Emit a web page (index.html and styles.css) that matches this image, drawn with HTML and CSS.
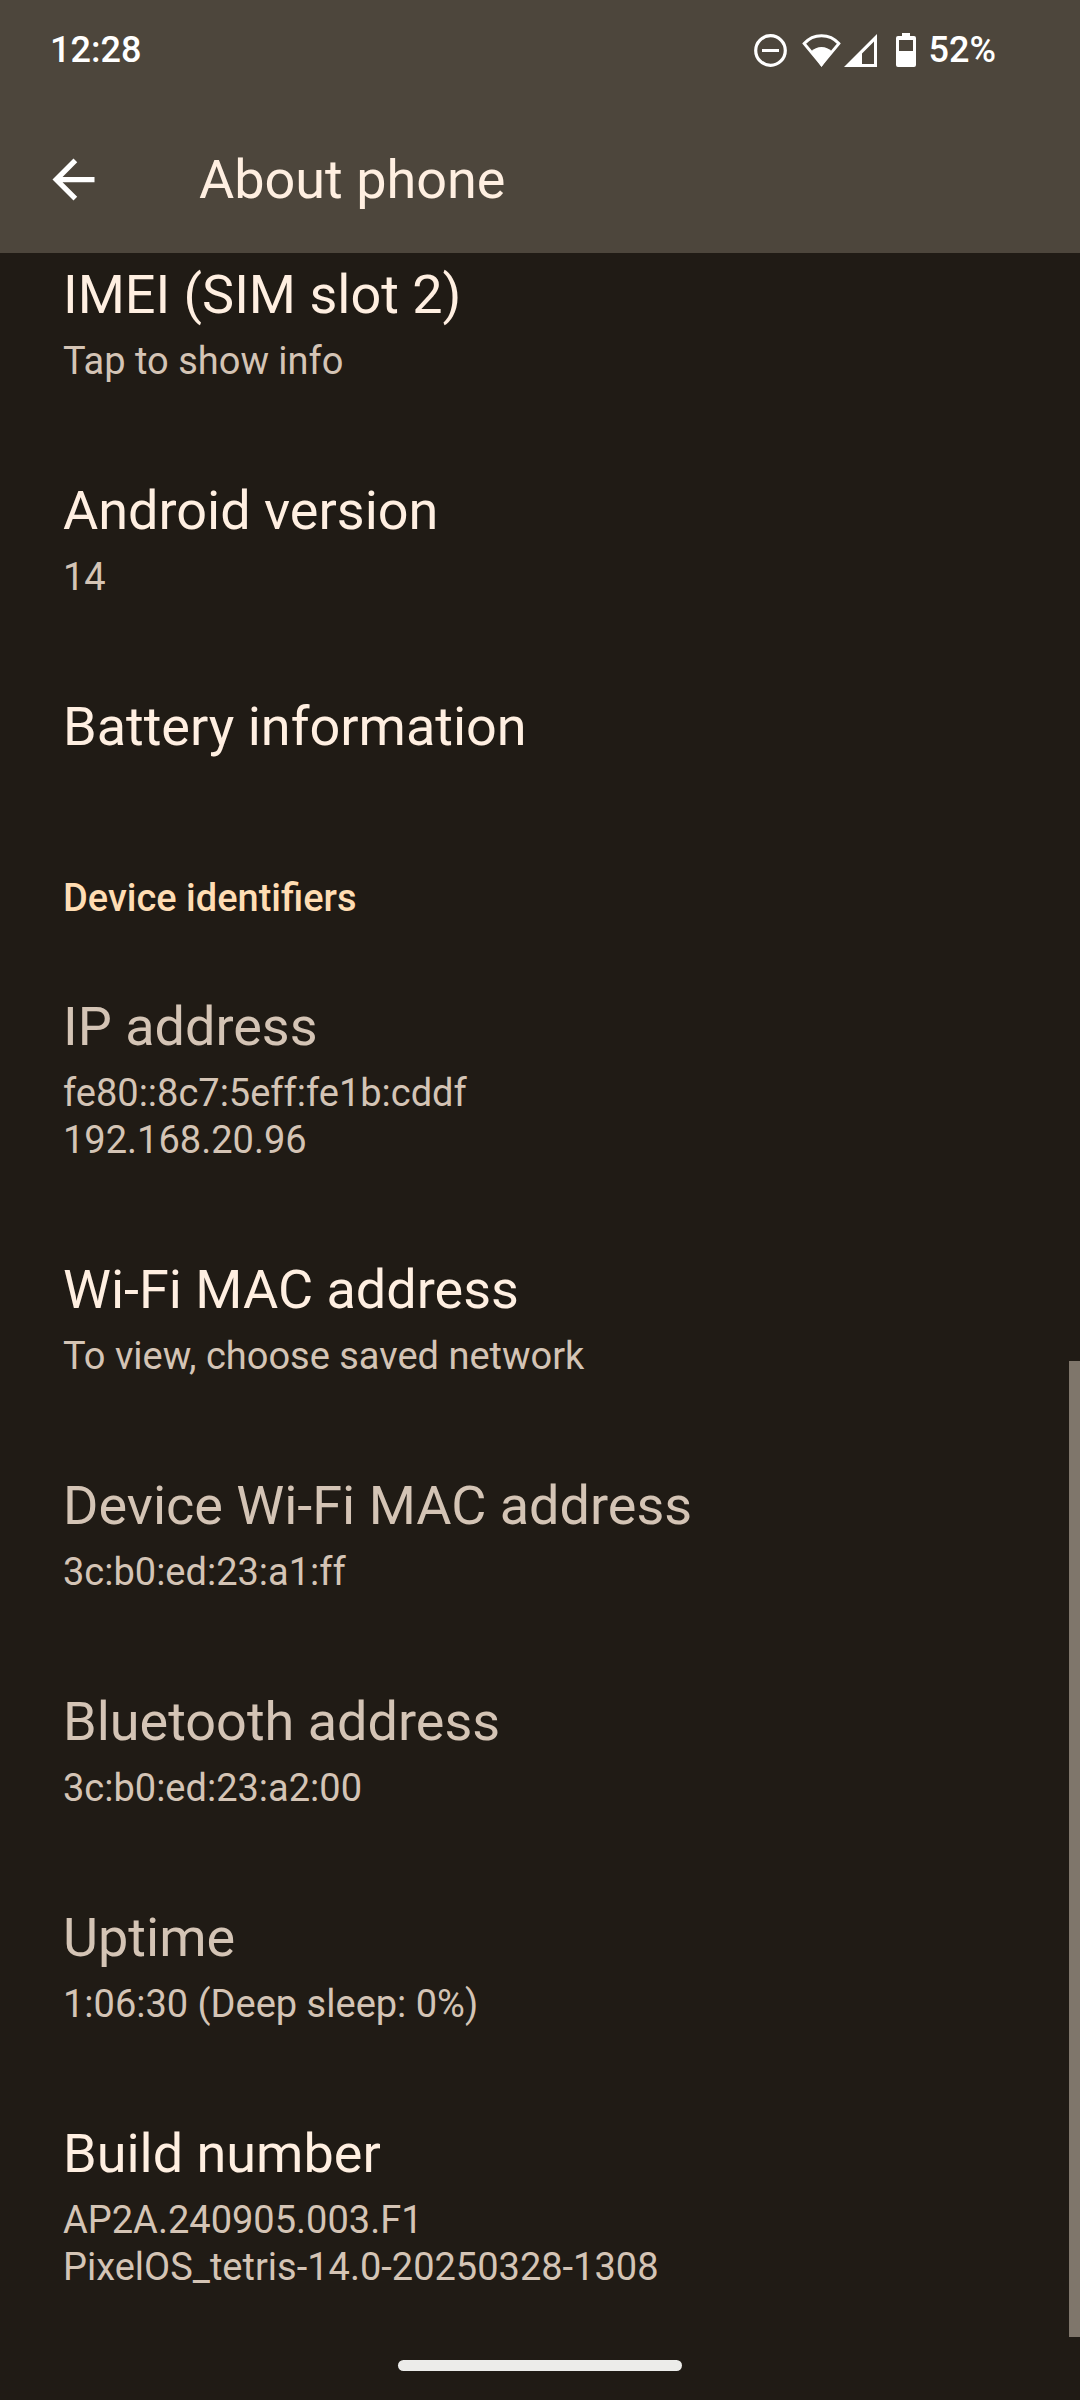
FILE: index.html
```html
<!DOCTYPE html>
<html lang="en">
<head>
<meta charset="utf-8">
<meta name="viewport" content="width=device-width, initial-scale=1">
<title>About phone</title>
<link rel="stylesheet" href="styles.css">
</head>
<body>
<div class="screen">
  <header class="header">
    <div class="status-bar">
      <time class="status-text">12:28</time>
      <div class="status-icons">
        <svg class="icon-dnd" width="33" height="33" viewBox="0 0 33 33" aria-hidden="true">
          <circle cx="16.5" cy="16.5" r="14.8" fill="none" stroke="#fff" stroke-width="3.2"/>
          <path d="M8 15h17v3H8z" fill="#fff"/>
        </svg>
        <svg class="icon-wifi" width="39" height="33" viewBox="0 0 39 33" aria-hidden="true">
          <path d="M2.2 9.6C6.7 4.4 13 1.7 19.5 1.7S32.300 4.400 36.800 9.600L19.500 30.500Z" fill="none" stroke="#fff" stroke-width="3"/>
          <path d="M9 17.500c3-3 6.500-4.500 10.500-4.500s7.500 1.500 10.500 4.500L19.500 33Z" fill="#fff"/>
        </svg>
        <svg class="icon-signal" width="33" height="33" viewBox="0 0 33 33" aria-hidden="true">
          <path fill-rule="evenodd" d="M33 0v33H0ZM30 7.500 18 19.500V30H30Z" fill="#fff"/>
        </svg>
        <svg class="icon-battery" width="20" height="34" viewBox="0 0 20 34" aria-hidden="true">
          <path fill-rule="evenodd" d="M6 0h8v3h4a2 2 0 0 1 2 2v27a2 2 0 0 1-2 2H2a2 2 0 0 1-2-2V5a2 2 0 0 1 2-2h4ZM3 7v11h14V7Z" fill="#fff"/>
        </svg>
        <span class="status-text">52%</span>
      </div>
    </div>
    <div class="app-bar">
      <button class="back" type="button" aria-label="Navigate up">
        <svg width="63" height="63" viewBox="0 0 24 24" aria-hidden="true">
          <path d="M20 11H7.830l5.590-5.590L12 4l-8 8 8 8 1.410-1.410L7.830 13H20z" fill="#fff"/>
        </svg>
      </button>
      <h1 class="app-title">About phone</h1>
    </div>
  </header>

  <main class="content">
    <ul class="list">
      <li><button class="item item-first" type="button">
        <span class="title">IMEI (SIM slot 2)</span>
        <span class="summary">Tap to show info</span>
      </button></li>
      <li><button class="item" type="button">
        <span class="title">Android version</span>
        <span class="summary">14</span>
      </button></li>
      <li><button class="item" type="button">
        <span class="title">Battery information</span>
      </button></li>
    </ul>
    <h2 class="category">Device identifiers</h2>
    <ul class="list">
      <li class="item item-static">
        <span class="title">IP address</span>
        <span class="summary">fe80::8c7:5eff:fe1b:cddf<br>192.168.20.96</span>
      </li>
      <li><button class="item" type="button">
        <span class="title">Wi-Fi MAC address</span>
        <span class="summary">To view, choose saved network</span>
      </button></li>
      <li class="item item-static">
        <span class="title">Device Wi-Fi MAC address</span>
        <span class="summary">3c:b0:ed:23:a1:ff</span>
      </li>
      <li class="item item-static">
        <span class="title">Bluetooth address</span>
        <span class="summary">3c:b0:ed:23:a2:00</span>
      </li>
      <li class="item item-static">
        <span class="title">Uptime</span>
        <span class="summary">1:06:30 (Deep sleep: 0%)</span>
      </li>
      <li><button class="item" type="button">
        <span class="title">Build number</span>
        <span class="summary">AP2A.240905.003.F1<br>PixelOS_tetris-14.0-20250328-1308</span>
      </button></li>
    </ul>
    <div class="scroll-thumb"></div>
  </main>

  <footer class="nav-bar"><div class="nav-handle"></div></footer>
</div>
</body>
</html>
```
FILE: styles.css
```css
* {
  box-sizing: border-box;
}

body {
  margin: 0;
  background: #201b15;
  color: #ffefe1;
  font-family: Roboto, "Liberation Sans", sans-serif;
}

.screen {
  display: flex;
  flex-direction: column;
  min-height: 100vh;
}

.header {
  background: #4d463c;
}

.status-bar {
  display: flex;
  align-items: center;
  justify-content: space-between;
  height: 100px;
  padding: 0 84px 0 50px;
}

.status-text {
  color: #fff;
  font-size: 36px;
  font-weight: 500;
  line-height: 44px;
}

.status-icons {
  display: flex;
  align-items: center;
}

.icon-dnd {
  margin-right: 15px;
}

.icon-wifi {
  margin-right: 3px;
}

.icon-signal {
  margin-right: 19px;
}

.icon-battery {
  margin-right: 13px;
}

.app-bar {
  display: flex;
  align-items: center;
  gap: 94px;
  height: 153px;
  padding: 5px 42px 0;
}

.back {
  display: flex;
  padding: 0;
  border: 0;
  background: none;
}

.app-title {
  margin: 0;
  font-size: 54px;
  font-weight: 400;
  line-height: 63px;
}

.content {
  position: relative;
  flex: 1;
}

.list {
  margin: 0;
  padding: 0;
  list-style: none;
}

.item {
  display: flex;
  flex-direction: column;
  gap: 12px;
  width: 100%;
  padding: 47px 63px;
  border: 0;
  background: none;
  color: #ffefe1;
  font: inherit;
  text-align: left;
}

.item-first {
  padding-top: 10px;
}

.item-static {
  color: #d4c4b5;
}

.title {
  font-size: 54px;
  line-height: 63px;
}

.summary {
  color: #d4c4b5;
  font-size: 38px;
  line-height: 47px;
}

.category {
  margin: 0;
  padding: 70px 63px 26px;
  color: #ffddb3;
  font-size: 38px;
  font-weight: 500;
  line-height: 47px;
}

.scroll-thumb {
  position: absolute;
  right: 0;
  bottom: 1px;
  width: 11px;
  height: 46.8%;
  background: #7f766b;
}

.nav-bar {
  display: flex;
  align-items: center;
  justify-content: center;
  height: 62px;
  padding-bottom: 7px;
}

.nav-handle {
  width: 284px;
  height: 11px;
  border-radius: 6px;
  background: #ececea;
}
```
